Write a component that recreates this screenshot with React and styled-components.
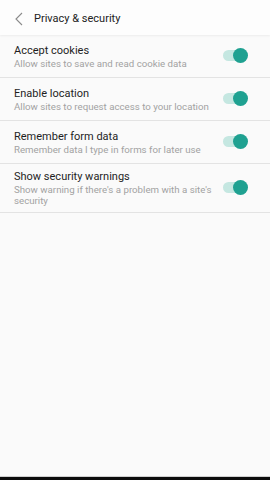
import React, { useState } from "react";
import styled, { createGlobalStyle } from "styled-components";

const Global = createGlobalStyle`
  html, body {
    margin: 0;
    padding: 0;
    height: 100%;
    background: #fafafa;
  }
  #root { height: 100%; }
  * { box-sizing: border-box; }
`;

const settings = [
  { id: "cookies", title: "Accept cookies", desc: "Allow sites to save and read cookie data" },
  { id: "location", title: "Enable location", desc: "Allow sites to request access to your location" },
  { id: "forms", title: "Remember form data", desc: "Remember data I type in forms for later use" },
  { id: "warnings", title: "Show security warnings", desc: "Show warning if there's a problem with a site's security" },
];

const App = () => {
  const [on, setOn] = useState({ cookies: true, location: true, forms: true, warnings: true });

  return (
    <>
      <Global />
      <Screen>
        <Header>
          <BackButton aria-label="Back">
            <svg width="8" height="14" viewBox="0 0 8 14">
              <path d="M7 1 L1 7 L7 13" fill="none" stroke="#8a8a8a" strokeWidth="1.1" />
            </svg>
          </BackButton>
          <Title>Privacy &amp; security</Title>
        </Header>
        <List>
          {settings.map((s) => (
            <Row key={s.id}>
              <Text>
                <RowTitle>{s.title}</RowTitle>
                <RowDesc>{s.desc}</RowDesc>
              </Text>
              <Toggle
                checked={on[s.id]}
                onClick={() => setOn({ ...on, [s.id]: !on[s.id] })}
              >
                <Knob checked={on[s.id]} />
              </Toggle>
            </Row>
          ))}
        </List>
        <Spacer />
        <NavBar />
      </Screen>
    </>
  );
};

export default App;

const Screen = styled.div`
  display: flex;
  flex-direction: column;
  height: 480px;
  background: #fafafa;
  font-family: Roboto, "Noto Sans", sans-serif;
`;

const Header = styled.div`
  display: flex;
  align-items: center;
  height: 35px;
  padding: 1px 0 0 15px;
  background: #fdfdfd;
  box-shadow: 0 1px 2px rgba(0, 0, 0, 0.06);
  gap: 11px;
`;

const BackButton = styled.div`
  display: flex;
  align-items: center;
  width: 8px;
  margin-top: 1px;
`;

const Title = styled.div`
  font-size: 11px;
  color: #222;
`;

const List = styled.div`
  display: flex;
  flex-direction: column;
`;

const Row = styled.div`
  display: flex;
  align-items: center;
  min-height: 43px;
  padding: 5px 14px 6px;
  border-bottom: 1px solid #e3e3e3;
`;

const Text = styled.div`
  flex: 1;
  min-width: 0;
  padding-right: 5px;
`;

const RowTitle = styled.div`
  font-size: 11px;
  line-height: 15px;
  color: #1e1e1e;
`;

const RowDesc = styled.div`
  font-size: 9.7px;
  line-height: 11px;
  color: #a2a2a2;
`;

const Toggle = styled.div`
  position: relative;
  flex: none;
  width: 19px;
  height: 11px;
  margin-right: 14px;
  border-radius: 6px;
  background: ${(p) => (p.checked ? "#c5e7e1" : "#ddd")};
  cursor: pointer;
`;

const Knob = styled.div`
  position: absolute;
  top: -2px;
  left: ${(p) => (p.checked ? "10px" : "-3px")};
  width: 15px;
  height: 15px;
  border-radius: 50%;
  background: ${(p) => (p.checked ? "#1fa191" : "#f1f1f1")};
`;

const Spacer = styled.div`
  flex: 1;
`;

const NavBar = styled.div`
  height: 4px;
  border-top: 1px solid #cfcfcf;
  background: #0c0c0c;
`;
